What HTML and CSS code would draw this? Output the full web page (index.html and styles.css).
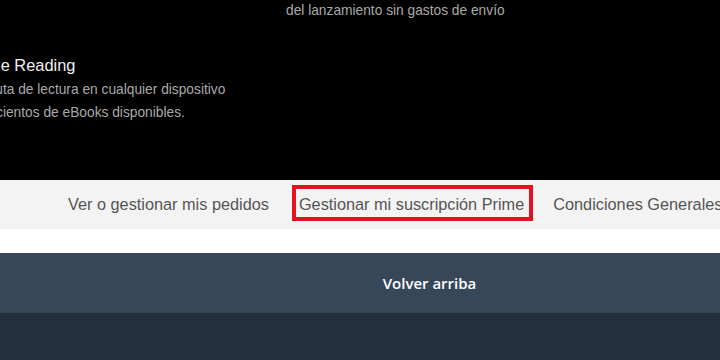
FILE: index.html
```html
<!DOCTYPE html>
<html lang="es">
<head>
<meta charset="utf-8">
<link rel="stylesheet" href="styles.css">
</head>
<body>
<section class="hero">
  <div class="promo promo-reading">
    <h3 class="promo-title">Prime Reading</h3>
    <p class="promo-text">Disfruta de lectura en cualquier dispositivo</p>
    <p class="promo-text">Con cientos de eBooks disponibles.</p>
  </div>
  <div class="promo promo-shipping">
    <p class="promo-text">del lanzamiento sin gastos de envío</p>
  </div>
</section>
<nav class="links">
  <a class="link">Ver o gestionar mis pedidos</a>
  <a class="link link-marked">Gestionar mi suscripción Prime</a>
  <a class="link">Condiciones Generales</a>
</nav>
<div class="gap"></div>
<div class="backtop"><span class="backtop-text">Volver arriba</span></div>
<footer class="footer"></footer>
</body>
</html>
```
FILE: styles.css
```css
html, body {
  margin: 0;
  padding: 0;
  background: #fff;
  width: 720px;
  height: 360px;
  overflow: hidden;
  font-family: "Liberation Sans", Arial, sans-serif;
}

.hero {
  background: #000;
  height: 180px;
  display: flex;
  overflow: hidden;
}

.promo-reading {
  margin-left: -33px;
  padding-top: 54px;
  width: 319px;
  flex: none;
}

.promo-shipping {
  margin-top: -1px;
}

.promo-title {
  margin: 0 0 2px;
  font-size: 16.4px;
  font-weight: normal;
  color: #f0f0f0;
  line-height: 22px;
}

.promo-text {
  margin: 0;
  font-size: 13.75px;
  line-height: 23px;
  color: #a9a9a9;
  white-space: nowrap;
}

.links {
  background: #f3f3f3;
  height: 49px;
  display: flex;
  align-items: center;
  padding-left: 68px;
  gap: 31px;
  white-space: nowrap;
}

.link {
  font-size: 16.3px;
  color: #555;
  flex: none;
}

.link-marked {
  border: 4px solid #e8101f;
  padding: 6px 5px 3px 3px;
  margin: 0 -11px 3px -8px;
}

.gap {
  height: 24px;
}

.backtop {
  background: #37475a;
  height: 60px;
  display: flex;
  align-items: center;
  justify-content: center;
  padding-left: 139px;
}

.backtop-text {
  font-family: "Open Sans", sans-serif;
  font-weight: 600;
  font-size: 15px;
  color: #fff;
}

.footer {
  background: #232f3e;
  height: 47px;
}
```
